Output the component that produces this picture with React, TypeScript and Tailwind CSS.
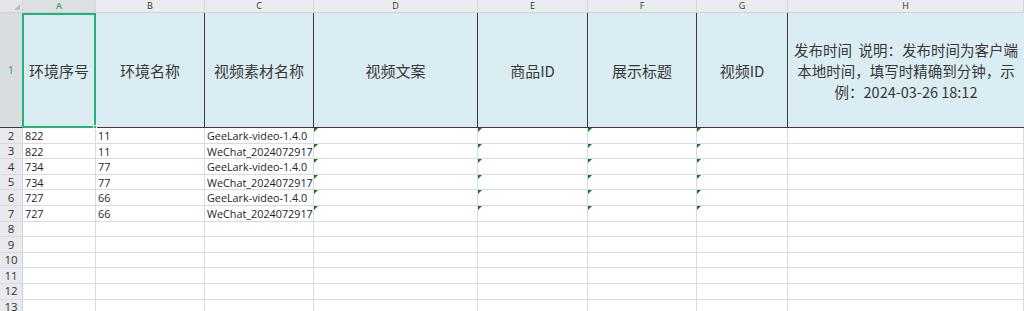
import React from "react";

const cols = ["A", "B", "C", "D", "E", "F", "G", "H"];
const widths = ["w-[73px]", "w-[109px]", "w-[109px]", "w-[164px]", "w-[110px]", "w-[109px]", "w-[91px]", "flex-1"];
const headers = ["环境序号", "环境名称", "视频素材名称", "视频文案", "商品ID", "展示标题", "视频ID"];
const data: string[][] = [
  ["822", "11", "GeeLark-video-1.4.0"],
  ["822", "11", "WeChat_20240729173355"],
  ["734", "77", "GeeLark-video-1.4.0"],
  ["734", "77", "WeChat_20240729173355"],
  ["727", "66", "GeeLark-video-1.4.0"],
  ["727", "66", "WeChat_20240729173355"],
];

const Tri = () => (
  <div className="absolute left-0 top-0 h-0 w-0 border-t-[4px] border-r-[4px] border-t-[#137a13] border-r-transparent" />
);

export default function App() {
  const rows = Array.from({ length: 12 }, (_, i) => i + 2);
  return (
    <div
      className="relative h-[311px] w-[1024px] overflow-hidden bg-white text-[#222]"
      style={{ fontFamily: '"Open Sans", "Noto Sans", "Noto Sans CJK SC", sans-serif' }}
    >
      {/* column headers */}
      <div className="flex h-[13px] border-b border-[#cfd3d8] bg-[#eaecef]">
        <div className="relative w-[23px] shrink-0 border-r border-[#cfd3d8] bg-[#e3e5e8]">
          <div className="absolute bottom-[2px] right-[2px] h-0 w-0 border-b-[6px] border-l-[6px] border-b-[#b9bcc0] border-l-transparent" />
        </div>
        {cols.map((c, i) => (
          <div
            key={c}
            className={`${widths[i]} shrink-0 border-r border-[#d3d6db] text-center text-[9px] leading-[12px] ${
              i === 0 ? "bg-[#dde0e3] font-semibold text-[#1fa463]" : "text-[#333]"
            }`}
          >
            {c}
          </div>
        ))}
      </div>

      {/* row 1 */}
      <div className="flex h-[115px] border-b border-[#3a3a3a]">
        <div className="flex w-[23px] shrink-0 items-center justify-center border-r border-[#cfd3d8] bg-[#d9dce0] text-[11px] text-[#1fa463]">
          1
        </div>
        {cols.map((c, i) => (
          <div
            key={c}
            className={`${widths[i]} flex shrink-0 items-center justify-center bg-[#daedf3] text-[#383838] ${
              i === 7 ? "" : "border-r border-[#3a3a3a]"
            }`}
            style={{ fontFamily: '"Noto Sans CJK SC", "Noto Sans", sans-serif' }}
          >
            {i < 7 ? (
              <span className="text-[15px] leading-none">{headers[i]}</span>
            ) : (
              <span className="whitespace-nowrap text-center text-[14.5px] leading-[21px]">
                发布时间&nbsp;&nbsp;说明：发布时间为客户端
                <br />
                本地时间，填写时精确到分钟，示
                <br />
                例：2024-03-26 18:12
              </span>
            )}
          </div>
        ))}
      </div>

      {/* data rows */}
      {rows.map((r) => {
        const d = data[r - 2];
        return (
          <div key={r} className="flex h-[15.6px] border-b border-[#d8dbe6]">
            <div className="flex w-[23px] shrink-0 items-center justify-center border-r border-[#cfd3d8] bg-[#e8eaed] text-[11.5px] font-medium leading-none text-[#333]">
              {r}
            </div>
            {cols.map((c, i) => (
              <div
                key={c}
                className={`${widths[i]} relative shrink-0 overflow-hidden whitespace-nowrap border-r border-[#d8dbe6] pl-[2px] text-[10.8px] leading-[15px] text-[#1e1e1e]`}
              >
                {d && i < 3 ? d[i] : ""}
                {d && i >= 3 && i <= 6 ? <Tri /> : null}
              </div>
            ))}
          </div>
        );
      })}

      {/* selection box on A1 */}
      <div className="pointer-events-none absolute left-[22px] top-[13px] h-[115px] w-[74px] border-2 border-[#21b374]" />
      <div className="pointer-events-none absolute left-[93px] top-[125px] h-[4px] w-[4px] border border-white bg-[#21b374]" />
    </div>
  );
}
